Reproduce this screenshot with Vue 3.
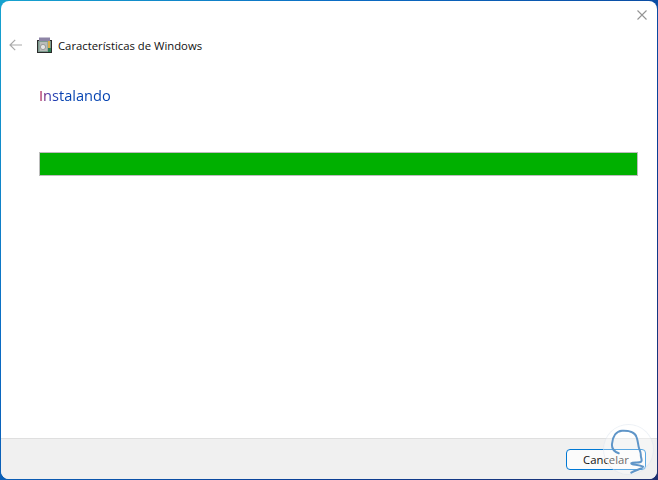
<script setup>
</script>

<template>
  <div class="desktop">
    <div class="window">
      <header class="titlebar">
        <svg class="back" width="13" height="12" viewBox="0 0 13 12" aria-hidden="true">
          <path d="M6.2 .8 1 6l5.2 5.2M1 6H13" fill="none" stroke="#a9a9a9" stroke-width="1.2" />
        </svg>
        <svg class="app-icon" width="16" height="16" viewBox="0 0 16 16" aria-hidden="true">
          <rect x="0" y="3" width="15" height="13" fill="#2b2b2b" />
          <rect x="1" y="4" width="13" height="11" fill="#7d9a8e" />
          <rect x="2" y="0.500" width="11" height="3.500" fill="#8d84a6" />
          <rect x="2.500" y="5" width="8" height="9" fill="#b9bcb9" />
          <circle cx="6" cy="10" r="2.600" fill="#e6e6e6" stroke="#777" stroke-width=".6" />
          <rect x="11" y="4" width="2" height="7" fill="#d8ad4a" />
          <rect x="11" y="11" width="3" height="4" fill="#2f7d55" />
        </svg>
        <span class="title">Características de Windows</span>
        <svg class="close" width="10" height="10" viewBox="0 0 10 10" aria-hidden="true">
          <path d="M.5 .5l9 9M9.500 .5l-9 9" stroke="#949494" stroke-width="1.100" fill="none" />
        </svg>
      </header>

      <main class="content">
        <h1 class="heading">Instalando</h1>
        <div class="progress"><div class="progress-fill"></div></div>
      </main>

      <footer class="footer">
        <button class="cancel" type="button">Cancelar</button>
      </footer>
    </div>

    <div class="badge" aria-hidden="true">
      <svg width="49" height="49" viewBox="0 0 49 49">
        <path d="M14.700 28.300C10 26.500 7.500 23.500 8 19 8.700 11 12.500 6 18 5.700 25 5.300 31 7.500 32.500 12 34 16 34 19 34.700 22 35.500 25.500 37 27 36.800 30 36.700 33 38.500 35 37.300 36.500 35.500 38.500 29 36.500 27.300 38.300 27 40 35 39.500 39 41.700 38 44.500 32 44.500 27.300 47.700"
          fill="none" stroke="#5f95c8" stroke-width="2" stroke-linecap="round" stroke-linejoin="round" />
      </svg>
    </div>
  </div>
</template>

<style>
html, body { margin: 0; padding: 0; background: #0a4fa8; }
</style>

<style scoped>
.desktop {
  position: relative;
  width: 658px;
  height: 480px;
  overflow: hidden;
  box-sizing: border-box;
  padding: 1px;
  background: linear-gradient(135deg, #17a3cf 0%, #0b6cc4 30%, #0a3f96 70%, #20306f 100%);
  font-family: "Open Sans", "Noto Sans", sans-serif;
}
.window {
  height: 100%;
  display: flex;
  flex-direction: column;
  background: #fff;
  border-radius: 8px;
  overflow: hidden;
}
.titlebar {
  position: relative;
  display: flex;
  align-items: center;
  height: 30px;
  margin-top: 29px;
  padding-left: 8px;
  flex: none;
}
.back { flex: none; }
.app-icon { margin-left: 15px; flex: none; }
.title {
  margin-left: 5px;
  font-size: 11.3px;
  color: #111;
  white-space: nowrap;
}
.close { position: absolute; left: 636px; top: -20px; }
.content {
  flex: 1;
  padding: 24px 19px 0 38px;
}
.heading {
  margin: 0;
  font-size: 14.6px;
  line-height: 22px;
  font-weight: 400;
  background: linear-gradient(90deg, #c0143f 0, #3a3ab0 10px, #0040b0 24px);
  -webkit-background-clip: text;
  background-clip: text;
  color: transparent;
  width: max-content;
}
.progress {
  margin-top: 46px;
  height: 24px;
  box-sizing: border-box;
  border: 1px solid #bcbcbc;
  background: #e6e6e6;
}
.progress-fill { height: 100%; background: #00b000; }
.footer {
  flex: none;
  height: 40px;
  display: flex;
  align-items: center;
  justify-content: flex-end;
  padding: 0 11px 0 0;
  background: #f0f0f0;
  border-top: 1px solid #dfdfdf;
}
.cancel {
  width: 80px;
  height: 21px;
  padding: 0;
  border: 1.5px solid #0078d4;
  border-radius: 4px;
  background: #fbfbfb;
  font: 11.3px "Open Sans", "Noto Sans", sans-serif;
  color: #111;
}
.badge {
  position: absolute;
  left: 604px;
  top: 425px;
  width: 49px;
  height: 49px;
  border-radius: 50%;
  background: rgba(255, 255, 255, .35);
  box-shadow: 0 0 0 1px rgba(225, 232, 240, .6);
  pointer-events: none;
}
.badge svg { display: block; }
</style>
